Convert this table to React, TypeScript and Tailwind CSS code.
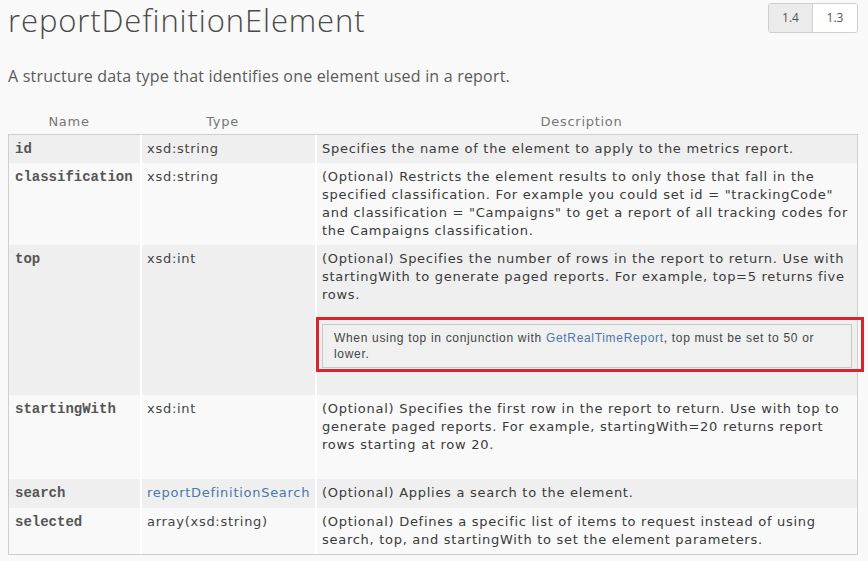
import { ReactNode } from 'react'

type Row = {
  name: string
  type: ReactNode
  desc: ReactNode
  shaded: boolean
  extra?: string
}

const link = 'text-[#4a78ad]'

const rows: Row[] = [
  {
    name: 'id',
    type: 'xsd:string',
    desc: 'Specifies the name of the element to apply to the metrics report.',
    shaded: true,
  },
  {
    name: 'classification',
    type: 'xsd:string',
    desc: '(Optional) Restricts the element results to only those that fall in the specified classification. For example you could set id = "trackingCode" and classification = "Campaigns" to get a report of all tracking codes for the Campaigns classification.',
    shaded: false,
  },
  {
    name: 'top',
    type: 'xsd:int',
    desc: (
      <>
        <p>
          (Optional) Specifies the number of rows in the report to return. Use with startingWith to generate paged
          reports. For example, top=5 returns five rows.
        </p>
        <div className="relative mt-[20px] mb-[22px]">
          <p className="border border-[#c8c8c8] bg-[#f0f0f0] px-[11px] py-[5px] font-['Liberation_Sans',Arial,sans-serif] text-[12px] leading-[16px] tracking-[0.68px] text-[#444]">
            When using top in conjunction with <a className={link}>GetRealTimeReport</a>, top must be set to 50 or
            lower.
          </p>
          <div className="pointer-events-none absolute -top-[7px] -bottom-[4px] -left-[6px] -right-[12px] border-[3px] border-[#d9232d]" />
        </div>
      </>
    ),
    shaded: true,
  },
  {
    name: 'startingWith',
    type: 'xsd:int',
    desc: '(Optional) Specifies the first row in the report to return. Use with top to generate paged reports. For example, startingWith=20 returns report rows starting at row 20.',
    shaded: false,
    extra: 'pb-[25px]',
  },
  {
    name: 'search',
    type: <a className={link}>reportDefinitionSearch</a>,
    desc: '(Optional) Applies a search to the element.',
    shaded: true,
    extra: 'pb-[6px]',
  },
  {
    name: 'selected',
    type: 'array(xsd:string)',
    desc: '(Optional) Defines a specific list of items to request instead of using search, top, and startingWith to set the element parameters.',
    shaded: false,
  },
]

export default function App() {
  return (
    <div className="min-h-screen bg-[#f9f9f9] px-[8px] text-[#333]">
      <div className="flex items-start justify-between">
        <h1 className="mt-[-1px] font-['Open_Sans',sans-serif] text-[31px] font-light leading-[42px] tracking-[0.9px] text-[#4a4a4a]">
          reportDefinitionElement
        </h1>
        <div className="mt-[3px] mr-[2px] flex h-[30px] overflow-hidden rounded-[3px] border border-[#cfcfcf] font-['Open_Sans',sans-serif] text-[12px] text-[#555]">
          <span className="flex w-[43px] items-center justify-center bg-[#ebebeb]">1.4</span>
          <span className="flex w-[45px] items-center justify-center border-l border-[#cfcfcf] bg-white">1.3</span>
        </div>
      </div>

      <p className="mt-[24px] font-['Open_Sans',sans-serif] text-[16px] leading-[22px] tracking-[0.2px] text-[#5a5a5a]">
        A structure data type that identifies one element used in a report.
      </p>

      <div className="mt-[26px] w-[850px] font-['DejaVu_Sans',Verdana,sans-serif] text-[13px] leading-[18px] tracking-[0.72px]">
        <div className="grid grid-cols-[132px_175px_543px] pb-[3px] text-[#777]">
          <div className="pr-[10px] text-center">Name</div>
          <div className="pr-[10px] text-center">Type</div>
          <div className="pr-[10px] text-center">Description</div>
        </div>

        <div className="border border-[#cfcfcf]">
          {rows.map((row) => (
            <div
              key={row.name}
              className={`grid grid-cols-[131px_175px_542px] ${row.shaded ? 'bg-[#efefef]' : 'bg-[#f9f9f9]'}`}
            >
              <div className="px-[6px] py-[5px] font-['Liberation_Mono','Courier_New',monospace] text-[14px] font-bold tracking-normal text-[#555]">
                {row.name}
              </div>
              <div className="border-l-2 border-white px-[5px] py-[5px] text-[#444]">{row.type}</div>
              <div className={`border-l-2 border-white px-[5px] py-[5px] text-[#3a3a3a] ${row.extra ?? ''}`}>
                {row.desc}
              </div>
            </div>
          ))}
        </div>
      </div>
    </div>
  )
}
